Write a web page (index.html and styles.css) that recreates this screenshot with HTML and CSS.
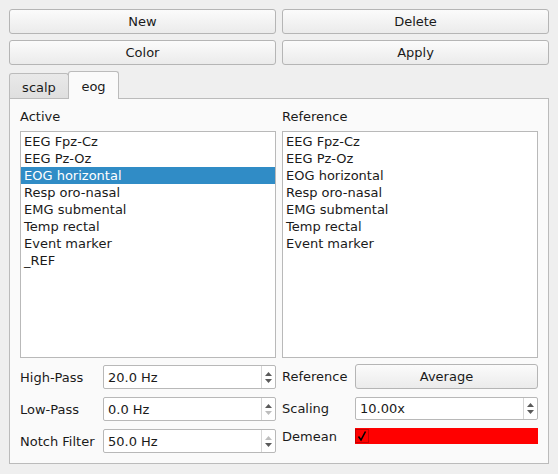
FILE: index.html
```html
<!DOCTYPE html>
<html>
<head>
<meta charset="utf-8">
<link rel="stylesheet" href="styles.css">
</head>
<body>
<div class="window">
  <div class="actions">
    <div class="btn">New</div>
    <div class="btn">Delete</div>
    <div class="btn">Color</div>
    <div class="btn">Apply</div>
  </div>
  <div class="tabs">
    <div class="tab tab-scalp">scalp</div>
    <div class="tab tab-eog active">eog</div>
  </div>
  <div class="pane">
    <div class="columns">
      <div class="col">
        <div class="heading">Active</div>
        <ul class="list">
          <li>EEG Fpz-Cz</li>
          <li>EEG Pz-Oz</li>
          <li class="selected">EOG horizontal</li>
          <li>Resp oro-nasal</li>
          <li>EMG submental</li>
          <li>Temp rectal</li>
          <li>Event marker</li>
          <li>_REF</li>
        </ul>
        <div class="form form-left">
          <span class="flabel">High-Pass</span>
          <div class="spin">
            <span class="val">20.0 Hz</span>
            <span class="arrows">
              <svg class="arrow" width="7" height="4" viewBox="0 0 7 4"><polygon points="0,4 7,4 3.5,0"/></svg>
              <svg class="arrow" width="7" height="4" viewBox="0 0 7 4"><polygon points="0,0 7,0 3.5,4"/></svg>
            </span>
          </div>
          <span class="flabel">Low-Pass</span>
          <div class="spin">
            <span class="val">0.0 Hz</span>
            <span class="arrows">
              <svg class="arrow" width="7" height="4" viewBox="0 0 7 4"><polygon points="0,4 7,4 3.5,0"/></svg>
              <svg class="arrow off" width="7" height="4" viewBox="0 0 7 4"><polygon points="0,0 7,0 3.5,4"/></svg>
            </span>
          </div>
          <span class="flabel">Notch Filter</span>
          <div class="spin">
            <span class="val">50.0 Hz</span>
            <span class="arrows">
              <svg class="arrow off" width="7" height="4" viewBox="0 0 7 4"><polygon points="0,4 7,4 3.5,0"/></svg>
              <svg class="arrow" width="7" height="4" viewBox="0 0 7 4"><polygon points="0,0 7,0 3.5,4"/></svg>
            </span>
          </div>
        </div>
      </div>
      <div class="col">
        <div class="heading">Reference</div>
        <ul class="list">
          <li>EEG Fpz-Cz</li>
          <li>EEG Pz-Oz</li>
          <li>EOG horizontal</li>
          <li>Resp oro-nasal</li>
          <li>EMG submental</li>
          <li>Temp rectal</li>
          <li>Event marker</li>
        </ul>
        <div class="form form-right">
          <span class="flabel">Reference</span>
          <div class="btn">Average</div>
          <span class="flabel">Scaling</span>
          <div class="spin">
            <span class="val">10.00x</span>
            <span class="arrows">
              <svg class="arrow" width="7" height="4" viewBox="0 0 7 4"><polygon points="0,4 7,4 3.5,0"/></svg>
              <svg class="arrow" width="7" height="4" viewBox="0 0 7 4"><polygon points="0,0 7,0 3.5,4"/></svg>
            </span>
          </div>
          <span class="flabel">Demean</span>
          <div class="checkrow">
            <span class="checkbox">
              <svg width="12" height="12" viewBox="0 0 12 12"><polyline points="2.5,6.5 5,10 9.5,1.5" fill="none" stroke="#000" stroke-width="1.6"/></svg>
            </span>
          </div>
        </div>
      </div>
    </div>
  </div>
</div>
</body>
</html>
```

FILE: styles.css
```css
* { box-sizing: border-box; }

body {
  margin: 0;
  background: #efefef;
  font-family: "DejaVu Sans", sans-serif;
  font-size: 13px;
  color: #1a1a1a;
}

.window {
  width: 558px;
  padding: 9px;
}

.actions {
  display: grid;
  grid-template-columns: 1fr 1fr;
  gap: 6px;
}

.btn {
  height: 25px;
  border: 1px solid #b5b5b5;
  border-radius: 3px;
  background: linear-gradient(#fbfbfb, #ebebeb);
  display: flex;
  align-items: center;
  justify-content: center;
}

.tabs {
  display: flex;
  align-items: flex-end;
  height: 27px;
  margin-top: 6px;
}

.tab {
  height: 25px;
  border: 1px solid #bbbbbb;
  border-bottom: none;
  border-radius: 3px 3px 0 0;
  background: linear-gradient(#e9e9e9, #dfdfdf);
  display: flex;
  align-items: center;
  justify-content: center;
  padding-top: 2px;
}

.tab-scalp { width: 60px; }

.tab-eog {
  width: 51px;
  margin-left: -1px;
}

.tab.active {
  height: 28px;
  margin-bottom: -1px;
  background: #fafafa;
  position: relative;
  z-index: 1;
}

.pane {
  border: 1px solid #bbbbbb;
  background: #fafafa;
  padding: 10px 10px 10px 10px;
}

.columns {
  display: grid;
  grid-template-columns: 1fr 1fr;
  column-gap: 6px;
}

.col {
  display: flex;
  flex-direction: column;
}

.heading {
  height: 16px;
  line-height: 16px;
  margin-bottom: 6px;
}

.list {
  list-style: none;
  margin: 0;
  height: 227px;
  padding: 1px 0;
  background: #ffffff;
  border: 1px solid #b9b9b9;
}

.list li {
  height: 17px;
  line-height: 17px;
  padding-left: 3px;
  white-space: nowrap;
}

.list li.selected {
  background: #308cc6;
  color: #ffffff;
}

.form {
  display: grid;
  align-items: center;
}

.form-left {
  margin-top: 7px;
  grid-template-columns: 83px 1fr;
  grid-template-rows: 24px 24px 24px;
  row-gap: 8px;
}

.form-right {
  margin-top: 6px;
  grid-template-columns: 73px 1fr;
  grid-template-rows: 25px 23px 16px;
  row-gap: 8px;
}

.flabel {
  white-space: nowrap;
}

.spin {
  height: 100%;
  display: flex;
  background: #ffffff;
  border: 1px solid #b8b8b8;
  border-radius: 2px;
}

.val {
  flex: 1;
  display: flex;
  align-items: center;
  padding-left: 4px;
}

.arrows {
  width: 14px;
  border-left: 1px solid #d6d6d6;
  display: flex;
  flex-direction: column;
  align-items: center;
  justify-content: center;
  gap: 3px;
}

.arrow { fill: #5a5a5a; display: block; }
.arrow.off { fill: #bdbdbd; }

.checkrow {
  height: 16px;
  background: #ff0000;
  display: flex;
  align-items: center;
}

.checkbox {
  width: 14px;
  height: 14px;
  border: 1px solid #c40000;
  display: flex;
  align-items: center;
  justify-content: center;
}
```
